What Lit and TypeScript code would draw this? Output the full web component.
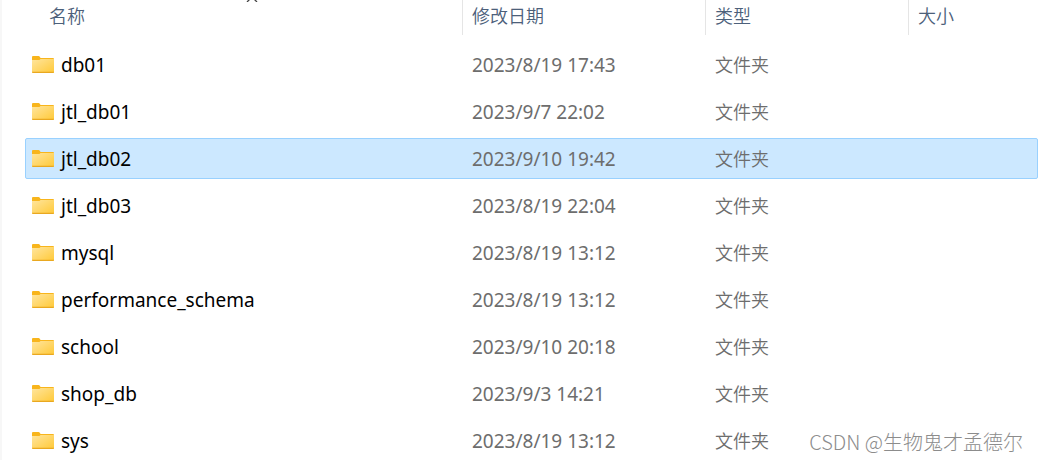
import { LitElement, html, css, svg } from "lit";
import { customElement, property, state } from "lit/decorators.js";
import { classMap } from "lit/directives/class-map.js";

interface Entry {
  name: string;
  modified: string;
}

const ENTRIES: Entry[] = [
  { name: "db01", modified: "2023/8/19 17:43" },
  { name: "jtl_db01", modified: "2023/9/7 22:02" },
  { name: "jtl_db02", modified: "2023/9/10 19:42" },
  { name: "jtl_db03", modified: "2023/8/19 22:04" },
  { name: "mysql", modified: "2023/8/19 13:12" },
  { name: "performance_schema", modified: "2023/8/19 13:12" },
  { name: "school", modified: "2023/9/10 20:18" },
  { name: "shop_db", modified: "2023/9/3 14:21" },
  { name: "sys", modified: "2023/8/19 13:12" },
];

@customElement("folder-icon")
export class FolderIcon extends LitElement {
  static styles = css`
    :host {
      display: block;
      flex: none;
      width: 22px;
      height: 18px;
    }
    svg {
      display: block;
    }
  `;

  render() {
    return html`<svg width="22" height="18" viewBox="0 0 22 18" aria-hidden="true">
      ${svg`
        <defs>
          <linearGradient id="front" x1="0" y1="0" x2="1" y2="1">
            <stop offset="0" stop-color="#ffe59e" />
            <stop offset="1" stop-color="#ffc937" />
          </linearGradient>
        </defs>
        <path d="M0 1Q0 0 1 0H6.6Q7.3 0 7.8 .8L8.6 2H21Q22 2 22 3V5H0Z" fill="#f8b51c" />
        <path d="M0 4H6.8Q7.5 4 8 3.5L8.5 3H22V16Q22 17 21 17H1Q0 17 0 16Z" fill="url(#front)" />
        <path d="M0 15.8H22Q22 17 21 17H1Q0 17 0 15.8Z" fill="#e9a820" />
      `}
    </svg>`;
  }
}

@customElement("file-list")
export class FileList extends LitElement {
  @property({ attribute: false }) entries: Entry[] = [];
  @state() private selected = "jtl_db02";

  static styles = css`
    :host {
      display: block;
      color: #6d6d6d;
      font-size: 19px;
      line-height: 24px;
    }
    .table,
    .head,
    .body {
      display: block;
    }
    .row {
      display: grid;
      grid-template-columns: 437px 243px 203px minmax(0, 1fr);
      box-sizing: border-box;
      height: 41px;
      margin-bottom: 6px;
      border: 1px solid transparent;
      border-radius: 2px;
    }
    .selected {
      background: #cce8ff;
      border-color: #99d1ff;
    }
    .titles {
      height: 35px;
      margin-bottom: 9px;
      border-width: 0;
    }
    .title {
      position: relative;
      padding: 0;
      border-left: 1px solid #e5e5e5;
      text-align: left;
    }
    .title:first-child {
      border-left-color: transparent;
      padding-left: 14px;
    }
    .sort {
      width: 100%;
      height: 32px;
      padding: 0 9px;
      border: 0;
      background: none;
      color: #4c607a;
      font: inherit;
      font-size: 18px;
      font-weight: 350;
      text-align: left;
    }
    .arrow {
      position: absolute;
      top: 0;
      left: 220px;
      width: 12px;
      height: 2px;
    }
    .cell {
      display: flex;
      align-items: center;
      padding: 0 9px;
      white-space: nowrap;
    }
    .name {
      gap: 7px;
      padding-left: 6px;
      color: #000;
    }
    .kind {
      font-size: 18px;
      font-weight: 350;
    }
  `;

  render() {
    return html`<table class="table">
      <thead class="head">
        <tr class="row titles">
          <th class="title" scope="col">
            <button class="sort" type="button">名称</button>
            <svg class="arrow" viewBox="0 0 12 2" aria-hidden="true">
              <path d="M3.5 -.5L1 2M8.5 -.5L11 2" fill="none" stroke="#444" stroke-width="1.3" />
            </svg>
          </th>
          <th class="title" scope="col"><button class="sort" type="button">修改日期</button></th>
          <th class="title" scope="col"><button class="sort" type="button">类型</button></th>
          <th class="title" scope="col"><button class="sort" type="button">大小</button></th>
        </tr>
      </thead>
      <tbody class="body">
        ${this.entries.map(
          (entry) => html`<tr
            class=${classMap({ row: true, selected: entry.name === this.selected })}
            @click=${() => (this.selected = entry.name)}
          >
            <td class="cell name"><folder-icon></folder-icon>${entry.name}</td>
            <td class="cell">${entry.modified}</td>
            <td class="cell kind">文件夹</td>
            <td class="cell"></td>
          </tr>`,
        )}
      </tbody>
    </table>`;
  }
}

@customElement("app-root")
export class AppRoot extends LitElement {
  static styles = css`
    :host {
      display: block;
      position: relative;
      box-sizing: border-box;
      height: 100vh;
      overflow: hidden;
      padding-left: 23px;
      border-left: 2px solid #f7f7f7;
      background: #fff;
      font-family: "Noto Sans", "Noto Sans CJK SC", sans-serif;
    }
    .watermark {
      position: absolute;
      right: 15px;
      bottom: 6px;
      color: #8c8c8c;
      font-family: "Noto Sans CJK SC", sans-serif;
      font-size: 20px;
      font-weight: 300;
      line-height: 24px;
    }
  `;

  render() {
    return html`
      <file-list .entries=${ENTRIES}></file-list>
      <div class="watermark">CSDN @生物鬼才孟德尔</div>
    `;
  }
}
